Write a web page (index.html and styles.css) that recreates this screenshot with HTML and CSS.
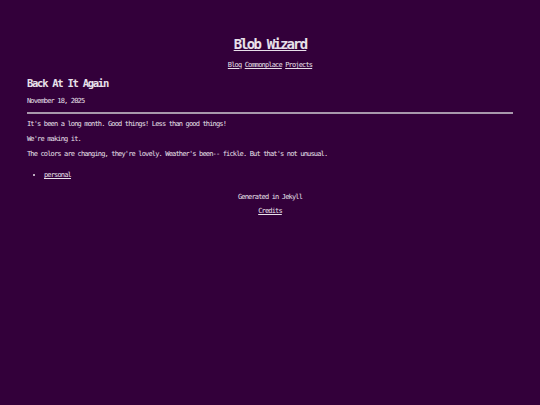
FILE: index.html
```html
<!DOCTYPE html>
<html>
<head>
<meta charset="utf-8">
<link rel="stylesheet" href="styles.css">
</head>
<body>
<div class="wrap">
  <header class="site-header">
    <h1 class="site-title"><a href="#">Blob Wizard</a></h1>
    <nav class="nav"><a href="#">Blog</a> <a href="#">Commonplace</a> <a href="#">Projects</a></nav>
  </header>
  <article class="post">
    <h2 class="post-title">Back At It Again</h2>
    <p class="date">November 18, 2025</p>
    <hr class="rule">
    <p class="para">It's been a long month. Good things! Less than good things!</p>
    <p class="para">We're making it.</p>
    <p class="para">The colors are changing, they're lovely. Weather's been-- fickle. But that's not unusual.</p>
    <ul class="tags"><li><a href="#">personal</a></li></ul>
  </article>
  <footer class="footer">
    <p class="gen">Generated in Jekyll</p>
    <p class="credits"><a href="#">Credits</a></p>
  </footer>
</div>
</body>
</html>
```

FILE: styles.css
```css
html, body {
  margin: 0;
  padding: 0;
  background: #33003a;
}
body {
  color: #e8e0ea;
  font-family: "DejaVu Sans Mono", "Liberation Mono", monospace;
  font-size: 7px;
  line-height: 8px;
  letter-spacing: -0.12em;
}
a { color: #e8e0ea; }
.wrap {
  width: 486px;
  margin: 0 auto;
  padding-top: 36px;
}
.site-header { text-align: center; }
.site-title {
  margin: 0;
  font-size: 14px;
  line-height: 16px;
  font-weight: bold;
  letter-spacing: -0.13em;
}
.nav {
  margin-top: 9px;
  line-height: 8px;
}
.post-title {
  margin: 8px 0 0;
  font-size: 10.5px;
  line-height: 12px;
  font-weight: bold;
  letter-spacing: -0.12em;
}
.date { margin: 8px 0 0; }
.rule {
  margin: 7px 0 0;
  border: 0;
  height: 2px;
  background: #a898ac;
}
.para { margin: 6px 0 0; }
.para + .para { margin-top: 7px; }
.tags {
  margin: 13px 0 0;
  padding-left: 17px;
}
.footer {
  text-align: center;
  margin-top: 14px;
}
.gen { margin: 0; }
.credits { margin: 6px 0 0; }
```
